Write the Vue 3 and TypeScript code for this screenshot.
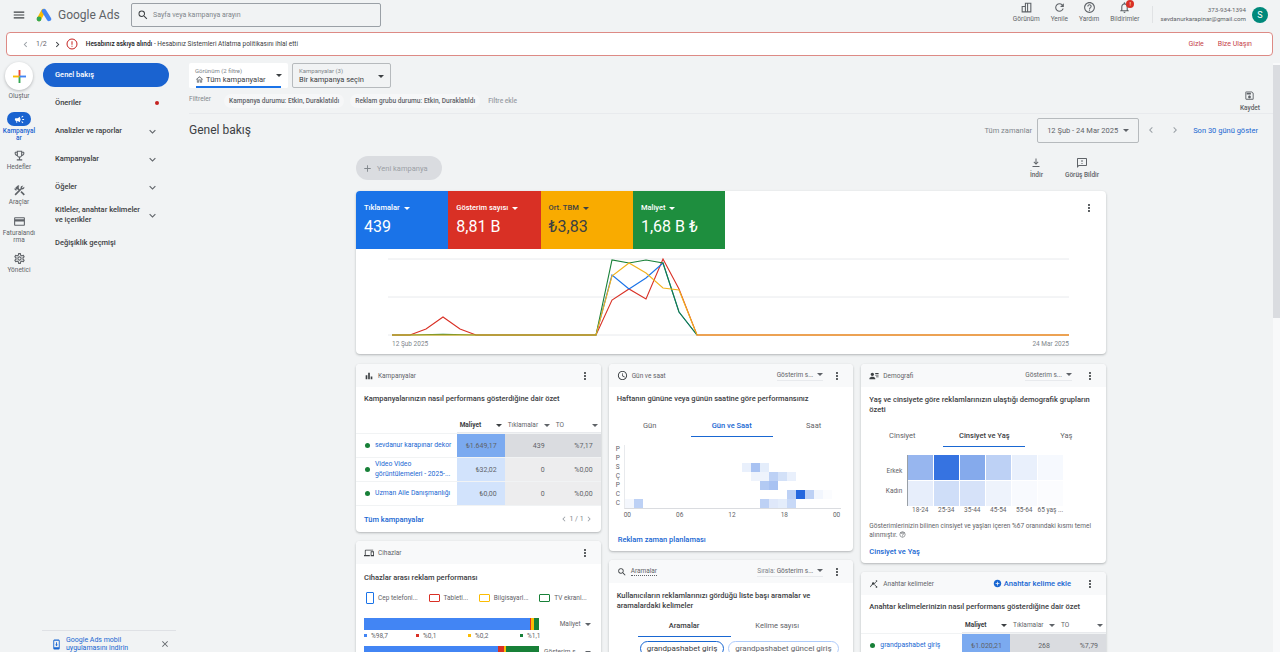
<template>
  <div class="page">
    <header class="topbar">
      <svg class="ic menu" viewBox="0 0 24 24"><path :d="icons.menu" /></svg>
      <svg class="logo" viewBox="0 0 16 14">
        <line x1="3" y1="11" x2="7.4" y2="3" stroke="#fbbc04" stroke-width="4.4" stroke-linecap="round" />
        <line x1="8" y1="3" x2="13" y2="11" stroke="#4285f4" stroke-width="4.4" stroke-linecap="round" />
        <circle cx="3" cy="11" r="2.4" fill="#34a853" />
      </svg>
      <span class="brand">Google Ads</span>
      <div class="search">
        <svg class="ic search-ic" viewBox="0 0 24 24"><path :d="icons.search" /></svg>
        <span>Sayfa veya kampanya arayın</span>
      </div>
      <div class="actions">
        <div v-for="a in topActions" :key="a.label" class="action">
          <svg class="ic" viewBox="0 0 24 24"><path :d="a.icon" /></svg>
          <span>{{ a.label }}</span>
          <i v-if="a.badge" class="badge">!</i>
        </div>
      </div>
      <div class="account">
        <span>373-934-1394</span>
        <span>sevdanurkarapinar@gmail.com</span>
      </div>
      <div class="avatar">S</div>
    </header>

    <div class="alert">
      <svg class="ic dim" viewBox="0 0 24 24"><path :d="icons.left" /></svg>
      <span class="pager">1/2</span>
      <svg class="ic" viewBox="0 0 24 24"><path :d="icons.right" /></svg>
      <svg class="alert-ic" viewBox="0 0 24 24"><circle cx="12" cy="12" r="10" /><path d="M11 6.5h2v7h-2zM11 15.5h2v2h-2z" /></svg>
      <span class="alert-text"><b>Hesabınız askıya alındı</b> - Hesabınız Sistemleri Atlatma politikasını ihlal etti</span>
      <span class="alert-link first">Gizle</span>
      <span class="alert-link">Bize Ulaşın</span>
    </div>

    <div class="body">
      <aside class="rail">
        <div class="create">
          <svg viewBox="0 0 14 14">
            <rect x="6" y="0" width="2" height="7" fill="#ea4335" />
            <rect x="6" y="7" width="2" height="7" fill="#34a853" />
            <rect x="0" y="6" width="7" height="2" fill="#fbbc04" />
            <rect x="7" y="6" width="7" height="2" fill="#4285f4" />
          </svg>
        </div>
        <span class="rail-label create-label">Oluştur</span>
        <div
          v-for="r in railItems"
          :key="r.label"
          class="rail-item"
          :class="{ active: r.active }"
          :style="{ marginBottom: r.gap + 'px' }"
        >
          <div class="rail-icon">
            <svg class="ic" viewBox="0 0 24 24"><path :d="r.icon" /></svg>
          </div>
          <span class="rail-label">{{ r.label }}</span>
        </div>
      </aside>

      <nav class="nav">
        <div class="nav-current">Genel bakış</div>
        <div v-for="n in navItems" :key="n.label" class="nav-item">
          <span>{{ n.label }}</span>
          <i v-if="n.dot" class="nav-dot"></i>
          <svg v-if="n.chevron" class="ic chev" viewBox="0 0 24 24"><path :d="icons.expand" /></svg>
        </div>
        <div class="nav-foot">
          <svg class="ic phone" viewBox="0 0 24 24"><path :d="icons.phone" /></svg>
          <span>Google Ads mobil<br />uygulamasını indirin</span>
          <svg class="ic close" viewBox="0 0 24 24"><path :d="icons.close" /></svg>
        </div>
      </nav>

      <main class="main">
        <section class="head">
          <div class="head-left">
            <div class="selectors">
              <div class="selector view">
                <small>Görünüm (2 filtre)</small>
                <span><svg class="ic home" viewBox="0 0 24 24"><path :d="icons.home" /></svg>Tüm kampanyalar</span>
                <i class="caret"></i>
              </div>
              <div class="selector camp">
                <small>Kampanyalar (3)</small>
                <span>Bir kampanya seçin</span>
                <i class="caret"></i>
              </div>
            </div>
            <div class="filters">
              <span class="filters-label">Filtreler</span>
              <span class="filter-chip">Kampanya durumu: Etkin, Duraklatıldı</span>
              <span class="filter-chip">Reklam grubu durumu: Etkin, Duraklatıldı</span>
              <span class="filter-add">Filtre ekle</span>
            </div>
          </div>
          <div class="save">
            <svg class="ic" viewBox="0 0 24 24"><path :d="icons.save" /></svg>
            <span>Kaydet</span>
          </div>
        </section>

        <section class="title-row">
          <h1>Genel bakış</h1>
          <span class="range-label">Tüm zamanlar</span>
          <div class="range">12 Şub - 24 Mar 2025<i class="caret"></i></div>
          <svg class="ic range-nav" viewBox="0 0 24 24"><path :d="icons.left" /></svg>
          <svg class="ic range-nav" viewBox="0 0 24 24"><path :d="icons.right" /></svg>
          <span class="range-link">Son 30 günü göster</span>
        </section>

        <div class="content">
          <div class="toolbar">
            <div class="new-camp">
              <svg class="ic" viewBox="0 0 24 24"><path :d="icons.add" /></svg>
              <span>Yeni kampanya</span>
            </div>
            <div class="tool first">
              <svg class="ic" viewBox="0 0 24 24"><path :d="icons.download" /></svg>
              <span>İndir</span>
            </div>
            <div class="tool">
              <svg class="ic" viewBox="0 0 24 24"><path :d="icons.feedback" /></svg>
              <span>Görüş Bildir</span>
            </div>
          </div>

          <div class="card chart-card">
            <div class="metrics">
              <div v-for="m in metrics" :key="m.label" class="metric" :class="m.cls">
                <span class="metric-label">{{ m.label }}<i class="caret"></i></span>
                <span class="metric-value">{{ m.value }}</span>
              </div>
              <svg class="ic more chart-more" viewBox="0 0 24 24"><path :d="icons.more" /></svg>
            </div>
            <svg class="chart" viewBox="356 248 750 106">
              <line v-for="y in [258, 296, 334]" :key="y" x1="388" x2="1069" :y1="y" :y2="y" stroke="#e8eaed" />
              <polyline v-for="s in series" :key="s.color" :points="s.points" :stroke="s.color" fill="none" stroke-width="1.1" />
              <text x="392" y="344.5" class="axis">12 Şub 2025</text>
              <text x="1069" y="344.5" class="axis" text-anchor="end">24 Mar 2025</text>
            </svg>
          </div>

          <div class="columns">
            <div class="col">
              <div class="card">
                <div class="card-head">
                  <svg class="ic head-ic" viewBox="0 0 24 24"><path :d="icons.bars" /></svg>
                  <span class="card-name">Kampanyalar</span>
                  <svg class="ic more" viewBox="0 0 24 24"><path :d="icons.more" /></svg>
                </div>
                <p class="card-title">Kampanyalarınızın nasıl performans gösterdiğine dair özet</p>
                <div class="perf-head spaced">
                  <span class="strong">Maliyet<i class="caret"></i></span>
                  <span>Tıklamalar<i class="caret"></i></span>
                  <span>TO<i class="caret"></i></span>
                </div>
                <div v-for="row in campaigns" :key="row.name" class="perf-row">
                  <i class="status"></i>
                  <span class="perf-name">{{ row.name }}</span>
                  <span class="perf-num" :style="{ background: row.costBg }">{{ row.cost }}</span>
                  <span class="perf-num" :style="{ background: row.restBg }">{{ row.clicks }}</span>
                  <span class="perf-num" :style="{ background: row.restBg }">{{ row.rate }}</span>
                </div>
                <div class="card-foot">
                  <span class="link">Tüm kampanyalar</span>
                  <span class="paging">
                    <svg class="ic" viewBox="0 0 24 24"><path :d="icons.left" /></svg>
                    1 / 1
                    <svg class="ic" viewBox="0 0 24 24"><path :d="icons.right" /></svg>
                  </span>
                </div>
              </div>

              <div class="card">
                <div class="card-head">
                  <svg class="ic head-ic" viewBox="0 0 24 24"><path :d="icons.devices" /></svg>
                  <span class="card-name">Cihazlar</span>
                  <svg class="ic more" viewBox="0 0 24 24"><path :d="icons.more" /></svg>
                </div>
                <p class="card-title device-title">Cihazlar arası reklam performansı</p>
                <div class="device-legend">
                  <span v-for="d in devices" :key="d.label" class="device">
                    <i class="device-ic" :class="d.shape" :style="{ borderColor: d.color }"></i>{{ d.label }}
                  </span>
                </div>
                <div v-for="b in deviceBars" :key="b.metric" class="device-row">
                  <div class="device-main">
                    <div class="stack">
                      <i v-for="s in b.segs" :key="s.color" :style="{ flexBasis: s.w + 'px', background: s.color }"></i>
                    </div>
                    <div v-if="b.legend" class="stack-legend">
                      <span v-for="s in b.segs" :key="s.color">
                        <i :style="{ background: s.color }"></i>{{ s.label }}
                      </span>
                    </div>
                  </div>
                  <span class="device-metric">{{ b.metric }}<i class="caret"></i></span>
                </div>
              </div>
            </div>

            <div class="col">
              <div class="card">
                <div class="card-head">
                  <svg class="ic head-ic big" viewBox="0 0 24 24"><path :d="icons.schedule" /></svg>
                  <span class="card-name">Gün ve saat</span>
                  <span class="head-select">Gösterim s...<i class="caret"></i></span>
                  <svg class="ic more" viewBox="0 0 24 24"><path :d="icons.more" /></svg>
                </div>
                <p class="card-title">Haftanın gününe veya günün saatine göre performansınız</p>
                <div class="tabs">
                  <span>Gün</span>
                  <span class="on">Gün ve Saat</span>
                  <span>Saat</span>
                </div>
                <div class="time-map">
                  <div class="time-days">
                    <span v-for="(d, i) in days" :key="i">{{ d }}</span>
                  </div>
                  <div class="time-grid">
                    <i v-for="c in timeCells" :key="c.key" :style="{ background: c.bg }"></i>
                  </div>
                </div>
                <div class="time-axis">
                  <span v-for="(h, i) in hours" :key="i">{{ h }}</span>
                </div>
                <div class="time-link link">Reklam zaman planlaması</div>
              </div>

              <div class="card">
                <div class="card-head">
                  <svg class="ic head-ic" viewBox="0 0 24 24"><path :d="icons.search" /></svg>
                  <span class="card-name under">Aramalar</span>
                  <span class="head-select"><em>Sırala:</em> Gösterim s...<i class="caret"></i></span>
                  <svg class="ic more" viewBox="0 0 24 24"><path :d="icons.more" /></svg>
                </div>
                <p class="card-title two">Kullanıcıların reklamlarınızı gördüğü liste başı aramalar ve aramalardaki kelimeler</p>
                <div class="tabs search-tabs">
                  <span class="on dark">Aramalar</span>
                  <span>Kelime sayısı</span>
                </div>
                <div class="chips">
                  <span class="chip sel">grandpashabet giriş</span>
                  <span class="chip">grandpashabet güncel giriş</span>
                </div>
              </div>
            </div>

            <div class="col">
              <div class="card">
                <div class="card-head">
                  <svg class="ic head-ic" viewBox="0 0 24 24"><path :d="icons.people" /></svg>
                  <span class="card-name">Demografi</span>
                  <span class="head-select demo-select">Gösterim s...<i class="caret"></i></span>
                  <svg class="ic more" viewBox="0 0 24 24"><path :d="icons.more" /></svg>
                </div>
                <p class="card-title two">Yaş ve cinsiyete göre reklamlarınızın ulaştığı demografik grupların özeti</p>
                <div class="tabs demo-tabs">
                  <span>Cinsiyet</span>
                  <span class="on dark">Cinsiyet ve Yaş</span>
                  <span>Yaş</span>
                </div>
                <div class="demo-map">
                  <div class="demo-rows"><span>Erkek</span><span>Kadın</span></div>
                  <div class="demo-grid">
                    <i v-for="c in demoCells" :key="c.key" :style="{ background: c.bg }"></i>
                  </div>
                </div>
                <div class="demo-axis">
                  <span v-for="a in ages" :key="a">{{ a }}</span>
                </div>
                <p class="demo-note">Gösterimlerinizin bilinen cinsiyet ve yaşları içeren %67 oranındaki kısmı temel alınmıştır. <svg class="ic note-ic" viewBox="0 0 24 24"><path :d="icons.help" /></svg></p>
                <div class="demo-link link">Cinsiyet ve Yaş</div>
              </div>

              <div class="card">
                <div class="card-head">
                  <svg class="ic head-ic" viewBox="0 0 24 24"><path :d="icons.keyword" /></svg>
                  <span class="card-name">Anahtar kelimeler</span>
                  <span class="add-kw">
                    <svg class="ic" viewBox="0 0 24 24"><path :d="icons.addCircle" /></svg>Anahtar kelime ekle
                  </span>
                  <svg class="ic more" viewBox="0 0 24 24"><path :d="icons.more" /></svg>
                </div>
                <p class="card-title">Anahtar kelimelerinizin nasıl performans gösterdiğine dair özet</p>
                <div class="perf-head">
                  <span class="strong">Maliyet<i class="caret"></i></span>
                  <span>Tıklamalar<i class="caret"></i></span>
                  <span>TO<i class="caret"></i></span>
                </div>
                <div class="perf-row">
                  <i class="status"></i>
                  <span class="perf-name">grandpashabet giriş</span>
                  <span class="perf-num" style="background: #7baaf0">₺1.020,21</span>
                  <span class="perf-num" style="background: #dadce0">268</span>
                  <span class="perf-num" style="background: #dadce0">%7,79</span>
                </div>
              </div>
            </div>
          </div>
        </div>
      </main>

      <div class="scrollbar"><i></i></div>
    </div>
  </div>
</template>

<script setup lang="ts">
import { computed } from 'vue'

const icons = {
  menu: 'M3 18h18v-2H3v2zm0-5h18v-2H3v2zm0-7v2h18V6H3z',
  search: 'M15.5 14h-.79l-.28-.27A6.471 6.471 0 0 0 16 9.5 6.5 6.5 0 1 0 9.5 16c1.61 0 3.09-.59 4.23-1.57l.27.28v.79l5 4.99L20.49 19l-4.99-5zm-6 0C7.01 14 5 11.99 5 9.5S7.01 5 9.5 5 14 7.01 14 9.5 11.99 14 9.5 14z',
  view: 'M3 21V9h6V3h12v18H3zm2-2h4v-8H5v8zm6 0h2V5h-2v14zm4 0h4V5h-4v14z',
  refresh: 'M17.65 6.35A7.958 7.958 0 0 0 12 4c-4.42 0-7.99 3.58-7.99 8s3.57 8 7.99 8c3.73 0 6.84-2.55 7.73-6h-2.08A5.99 5.99 0 0 1 12 18c-3.31 0-6-2.69-6-6s2.69-6 6-6c1.66 0 3.14.69 4.22 1.78L13 11h7V4l-2.35 2.35z',
  help: 'M11 18h2v-2h-2v2zm1-16C6.48 2 2 6.48 2 12s4.48 10 10 10 10-4.48 10-10S17.52 2 12 2zm0 18c-4.41 0-8-3.59-8-8s3.59-8 8-8 8 3.59 8 8-3.59 8-8 8zm0-14c-2.21 0-4 1.79-4 4h2c0-1.1.9-2 2-2s2 .9 2 2c0 2-3 1.75-3 5h2c0-2.25 3-2.5 3-5 0-2.21-1.79-4-4-4z',
  bell: 'M12 22c1.1 0 2-.9 2-2h-4c0 1.1.9 2 2 2zm6-6v-5c0-3.07-1.63-5.64-4.5-6.32V4c0-.83-.67-1.5-1.5-1.5s-1.5.67-1.5 1.5v.68C7.64 5.36 6 7.92 6 11v5l-2 2v1h16v-1l-2-2zm-2 1H8v-6c0-2.48 1.51-4.5 4-4.5s4 2.02 4 4.5v6z',
  more: 'M12 8c1.1 0 2-.9 2-2s-.9-2-2-2-2 .9-2 2 .9 2 2 2zm0 2c-1.1 0-2 .9-2 2s.9 2 2 2 2-.9 2-2-.9-2-2-2zm0 6c-1.1 0-2 .9-2 2s.9 2 2 2 2-.9 2-2-.9-2-2-2z',
  expand: 'M16.59 8.59 12 13.17 7.41 8.59 6 10l6 6 6-6z',
  left: 'M15.41 7.41 14 6l-6 6 6 6 1.41-1.41L10.83 12z',
  right: 'M10 6 8.59 7.41 13.17 12l-4.58 4.59L10 18l6-6z',
  add: 'M19 13h-6v6h-2v-6H5v-2h6V5h2v6h6v2z',
  campaign: 'M18 11v2h4v-2h-4zm-2 6.61c.96.71 2.21 1.65 3.2 2.39.4-.53.8-1.07 1.2-1.6-.99-.74-2.24-1.68-3.2-2.4-.4.54-.8 1.08-1.2 1.61zM20.4 5.6c-.4-.53-.8-1.07-1.2-1.6-.99.74-2.24 1.68-3.2 2.4.4.53.8 1.07 1.2 1.6.96-.72 2.21-1.65 3.2-2.4zM4 9c-1.1 0-2 .9-2 2v2c0 1.1.9 2 2 2h1v4h2v-4h1l5 3V6L8 9H4zm11.5 3c0-1.33-.58-2.53-1.5-3.35v6.69c.92-.81 1.5-2.01 1.5-3.34z',
  trophy: 'M19 5h-2V3H7v2H5c-1.1 0-2 .9-2 2v1c0 2.55 1.92 4.63 4.39 4.94.63 1.5 1.98 2.63 3.61 2.96V19H7v2h10v-2h-4v-3.1c1.63-.33 2.98-1.46 3.61-2.96C19.08 12.63 21 10.55 21 8V7c0-1.1-.9-2-2-2zM5 8V7h2v3.82C5.84 10.4 5 9.3 5 8zm7 6c-1.65 0-3-1.35-3-3V5h6v6c0 1.65-1.35 3-3 3zm7-6c0 1.3-.84 2.4-2 2.82V7h2v1z',
  tools: 'M13.78 15.3 19.78 21.3 21.89 19.14 15.89 13.14zM17.5 10c1.93 0 3.5-1.57 3.5-3.5 0-.58-.16-1.12-.41-1.6l-2.7 2.7-1.49-1.49 2.7-2.7c-.48-.25-1.02-.41-1.6-.41C15.57 3 14 4.57 14 6.5c0 .41.08.8.21 1.16l-1.85 1.85-1.78-1.78.71-.71-1.41-1.41L12 3.49a3 3 0 0 0-4.24 0L4.22 7.03l1.41 1.41H2.81l-.71.71 3.54 3.54.71-.71V9.15l1.41 1.41.71-.71 1.78 1.78-7.41 7.41 2.12 2.12L16.34 9.79c.36.13.75.21 1.16.21z',
  card: 'M20 4H4c-1.11 0-1.99.89-1.99 2L2 18c0 1.11.89 2 2 2h16c1.11 0 2-.89 2-2V6c0-1.11-.89-2-2-2zm0 14H4v-6h16v6zm0-10H4V6h16v2z',
  gear: 'M19.43 12.98c.04-.32.07-.64.07-.98s-.03-.66-.07-.98l2.11-1.65c.19-.15.24-.42.12-.64l-2-3.46c-.12-.22-.39-.3-.61-.22l-2.49 1c-.52-.4-1.08-.73-1.69-.98l-.38-2.65C14.46 2.18 14.25 2 14 2h-4c-.25 0-.46.18-.49.42l-.38 2.65c-.61.25-1.17.59-1.69.98l-2.49-1c-.23-.09-.49 0-.61.22l-2 3.46c-.13.22-.07.49.12.64l2.11 1.65c-.04.32-.07.65-.07.98s.03.66.07.98l-2.11 1.65c-.19.15-.24.42-.12.64l2 3.46c.12.22.39.3.61.22l2.49-1c.52.4 1.08.73 1.69.98l.38 2.65c.03.24.24.42.49.42h4c.25 0 .46-.18.49-.42l.38-2.65c.61-.25 1.17-.59 1.69-.98l2.49 1c.23.09.49 0 .61-.22l2-3.46c.12-.22.07-.49-.12-.64l-2.11-1.65zM17.45 11.27c.04.31.05.52.05.73 0 .21-.02.43-.05.73l-.14 1.13.89.7 1.08.84-.7 1.21-1.27-.51-1.04-.42-.9.68c-.43.32-.84.56-1.25.73l-1.06.43-.16 1.13-.2 1.35h-1.4l-.19-1.35-.16-1.13-1.06-.43c-.43-.18-.83-.41-1.23-.71l-.91-.7-1.06.43-1.27.51-.7-1.21 1.08-.84.89-.7-.14-1.13c-.03-.31-.05-.54-.05-.74s.02-.43.05-.73l.14-1.13-.89-.7-1.08-.84.7-1.21 1.27.51 1.04.42.9-.68c.43-.32.84-.56 1.25-.73l1.06-.43.16-1.13.2-1.35h1.39l.19 1.35.16 1.13 1.06.43c.43.18.83.41 1.23.71l.91.7 1.06-.43 1.27-.51.7 1.21-1.07.85-.89.7.14 1.13zM12 8c-2.21 0-4 1.79-4 4s1.79 4 4 4 4-1.79 4-4-1.79-4-4-4zm0 6c-1.1 0-2-.9-2-2s.9-2 2-2 2 .9 2 2-.9 2-2 2z',
  save: 'M17 3H5c-1.11 0-2 .9-2 2v14c0 1.1.89 2 2 2h14c1.1 0 2-.9 2-2V7l-4-4zm2 16H5V5h11.17L19 7.83V19zm-7-7c-1.66 0-3 1.34-3 3s1.34 3 3 3 3-1.34 3-3-1.34-3-3-3zM6 6h9v4H6z',
  download: 'M5 20h14v-2H5v2zm2-9.4 1.4-1.4 2.6 2.6V3h2v8.8l2.6-2.6 1.4 1.4-5 5-5-5z',
  feedback: 'M20 2H4c-1.1 0-1.99.9-1.99 2L2 22l4-4h14c1.1 0 2-.9 2-2V4c0-1.1-.9-2-2-2zm0 14H5.17L4 17.17V4h16v12zM11 12h2v2h-2zm0-6h2v4h-2z',
  home: 'M12 5.69l5 4.5V18h-2v-6H9v6H7v-7.81l5-4.5M12 3 2 12h3v8h6v-6h2v6h6v-8h3L12 3z',
  bars: 'M4 20V10h4v10H4zm6 0V4h4v16h-4zm6 0v-7h4v7h-4z',
  devices: 'M4 6h18V4H4c-1.1 0-2 .9-2 2v11H0v3h14v-3H4V6zm19 2h-6c-.55 0-1 .45-1 1v10c0 .55.45 1 1 1h6c.55 0 1-.45 1-1V9c0-.55-.45-1-1-1zm-1 9h-4v-7h4v7z',
  schedule: 'M11.99 2C6.47 2 2 6.48 2 12s4.47 10 9.99 10C17.52 22 22 17.52 22 12S17.52 2 11.99 2zM12 20c-4.42 0-8-3.58-8-8s3.58-8 8-8 8 3.58 8 8-3.58 8-8 8zm.5-13H11v6l5.25 3.15.75-1.23-4.5-2.67z',
  people: 'M8 12c2.2 0 4-1.8 4-4S10.2 4 8 4 4 5.8 4 8s1.8 4 4 4zm0 2c-2.7 0-7 1.3-7 4v2h14v-2c0-2.7-4.3-4-7-4zM15 5h8v2h-8zM15 9h8v2h-8zM17 13h6v2h-6z',
  keyword: 'M3 20l6-7-1.5-1.3L2 18.5zM10 14a3 3 0 1 0 0-6 3 3 0 0 0 0 6zm8-7a2 2 0 1 0 0-4 2 2 0 0 0 0 4zm0 14a2 2 0 1 0 0-4 2 2 0 0 0 0 4zm-5.5-10.6 3.6-3.2 1 1.2-3.6 3.2zm0 3.2 1-1.2 3.6 3.6-1 1.2z',
  addCircle: 'M12 2C6.48 2 2 6.48 2 12s4.48 10 10 10 10-4.48 10-10S17.52 2 12 2zm5 11h-4v4h-2v-4H7v-2h4V7h2v4h4v2z',
  close: 'M19 6.41 17.59 5 12 10.59 6.41 5 5 6.41 10.59 12 5 17.59 6.41 19 12 13.41 17.59 19 19 17.59 13.41 12z',
  phone: 'M16 1H8C6.34 1 5 2.34 5 4v16c0 1.66 1.34 3 3 3h8c1.66 0 3-1.34 3-3V4c0-1.66-1.34-3-3-3zm1 17H7V4h10v14zm-5-2 3-4h-2V7h-2v5H9l3 4z',
}

const topActions = [
  { label: 'Görünüm', icon: icons.view, badge: false },
  { label: 'Yenile', icon: icons.refresh, badge: false },
  { label: 'Yardım', icon: icons.help, badge: false },
  { label: 'Bildirimler', icon: icons.bell, badge: true },
]

const railItems = [
  { label: 'Kampanyalar', icon: icons.campaign, active: true, gap: 6 },
  { label: 'Hedefler', icon: icons.trophy, active: false, gap: 12 },
  { label: 'Araçlar', icon: icons.tools, active: false, gap: 8 },
  { label: 'Faturalandırma', icon: icons.card, active: false, gap: 7 },
  { label: 'Yönetici', icon: icons.gear, active: false, gap: 0 },
]

const navItems = [
  { label: 'Öneriler', dot: true, chevron: false },
  { label: 'Analizler ve raporlar', dot: false, chevron: true },
  { label: 'Kampanyalar', dot: false, chevron: true },
  { label: 'Öğeler', dot: false, chevron: true },
  { label: 'Kitleler, anahtar kelimeler ve içerikler', dot: false, chevron: true },
  { label: 'Değişiklik geçmişi', dot: false, chevron: false },
]

const metrics = [
  { label: 'Tıklamalar', value: '439', cls: 'blue' },
  { label: 'Gösterim sayısı', value: '8,81 B', cls: 'red' },
  { label: 'Ort. TBM', value: '₺3,83', cls: 'amber' },
  { label: 'Maliyet', value: '1,68 B ₺', cls: 'green' },
]

const series = [
  { color: '#d93025', points: '392,334 410,334 426,328 443,316 460,328 476,334 596,334 612,299 629,288 646,298 663,258 679,288 697,334 1069,334' },
  { color: '#1a73e8', points: '596,334 612,274 629,288 646,277 663,262 679,311 697,334' },
  { color: '#188038', points: '392,334 410,334 443,333.4 476,334 596,334 612,259 629,262 646,259 663,262 679,311 697,334' },
  { color: '#f2b21b', points: '392,334 596,334 612,275 629,262 646,272 663,287 679,289 697,334 1069,334' },
]

const campaigns = [
  { name: 'sevdanur karapınar dekor', cost: '₺1.649,17', clicks: '439', rate: '%7,17', costBg: '#7baaf0', restBg: '#dadce0' },
  { name: 'Video Video görüntülemeleri - 2025-...', cost: '₺32,02', clicks: '0', rate: '%0,00', costBg: '#d2e3fc', restBg: '#ededee' },
  { name: 'Uzman Aile Danışmanlığı', cost: '₺0,00', clicks: '0', rate: '%0,00', costBg: '#d2e3fc', restBg: '#ededee' },
]

const devices = [
  { label: 'Cep telefonl...', color: '#1a73e8', shape: 'tall' },
  { label: 'Tabletl...', color: '#d93025', shape: 'wide' },
  { label: 'Bilgisayarl...', color: '#fbbc04', shape: 'wide' },
  { label: 'TV ekranl...', color: '#188038', shape: 'wide' },
]

const deviceBars = [
  {
    metric: 'Maliyet',
    legend: true,
    segs: [
      { w: 166, color: '#4285f4', label: '%98,7' },
      { w: 1, color: '#d93025', label: '%0,1' },
      { w: 3, color: '#fbbc04', label: '%0,2' },
      { w: 5, color: '#188038', label: '%1,1' },
    ],
  },
  {
    metric: 'Gösterim s...',
    legend: false,
    segs: [
      { w: 134, color: '#4285f4', label: '' },
      { w: 6, color: '#d93025', label: '' },
      { w: 2, color: '#fbbc04', label: '' },
      { w: 33, color: '#188038', label: '' },
    ],
  },
]

const days = ['P', 'P', 'S', 'Ç', 'P', 'C', 'C']
const hours = ['00', '06', '12', '18', '00']
const ages = ['18-24', '25-34', '35-44', '45-54', '55-64', '65 yaş ...']

// [day row, hour column, intensity]
const timeValues: [number, number, number][] = [
  [2, 13, 0.1], [2, 14, 0.4], [2, 15, 0.12],
  [3, 14, 0.08], [3, 15, 0.08], [3, 16, 0.3], [3, 17, 0.2], [3, 18, 0.1],
  [4, 15, 0.35], [4, 16, 0.4],
  [5, 18, 0.3], [5, 19, 1], [5, 20, 0.3], [5, 21, 0.06], [5, 22, 0.02],
  [6, 0, 0.05], [6, 1, 0.3], [6, 15, 0.3], [6, 16, 0.15], [6, 17, 0.12], [6, 18, 0.25],
]

function shade(v: number) {
  return v > 0 ? `rgba(37, 103, 222, ${v})` : 'transparent'
}

const timeCells = computed(() => {
  const cells = []
  for (let r = 0; r < 7; r++) {
    for (let c = 0; c < 24; c++) {
      const hit = timeValues.find((t) => t[0] === r && t[1] === c)
      cells.push({ key: `${r}-${c}`, bg: shade(hit ? hit[2] : 0) })
    }
  }
  return cells
})

const demoValues = [0.48, 0.92, 0.56, 0.3, 0.1, 0.04, 0.11, 0.22, 0.19, 0.08, 0.03, 0.02]
const demoCells = computed(() => demoValues.map((v, i) => ({ key: i, bg: shade(v) })))
</script>

<style>
html,
body {
  margin: 0;
  height: 100%;
  overflow: hidden;
  background: #f1f3f4;
}
</style>

<style scoped>
.page {
  display: flex;
  flex-direction: column;
  width: 1280px;
  height: 652px;
  overflow: hidden;
  background: #f1f3f4;
  color: #3c4043;
  font-family: Roboto, 'Noto Sans', sans-serif;
  font-size: 7px;
}

.ic {
  display: block;
  flex: none;
  width: 12px;
  height: 12px;
  fill: #5f6368;
}

p,
h1 {
  margin: 0;
}

i {
  font-style: normal;
}

.caret {
  display: inline-block;
  width: 0;
  height: 0;
  margin-left: 4px;
  vertical-align: middle;
  border-top: 3px solid currentColor;
  border-left: 3px solid transparent;
  border-right: 3px solid transparent;
}

/* top bar */
.topbar {
  display: flex;
  flex: none;
  align-items: center;
  height: 29px;
  padding: 0 12px;
}

.menu {
  width: 14px;
  height: 14px;
  margin-right: 10px;
  fill: #3c4043;
}

.logo {
  width: 16px;
  height: 14px;
  margin-right: 6px;
}

.brand {
  width: 73px;
  font-size: 12px;
  color: #5f6368;
}

.search {
  display: flex;
  align-items: center;
  gap: 4px;
  width: 250px;
  height: 24px;
  padding: 0 5px;
  box-sizing: border-box;
  border: 1px solid #9aa0a6;
  border-radius: 2px;
  color: #80868b;
}

.search-ic {
  width: 12px;
  height: 12px;
  fill: #3c4043;
}

.actions {
  display: flex;
  gap: 11px;
  margin-left: auto;
  padding-right: 13px;
  border-right: 1px solid #e0e2e4;
  margin-right: 7px;
}

.action {
  position: relative;
  display: flex;
  flex-direction: column;
  align-items: center;
  gap: 1px;
  margin-top: -5px;
  font-size: 6.5px;
  color: #5f6368;
}

.action .ic {
  width: 13px;
  height: 13px;
}

.badge {
  position: absolute;
  top: -1px;
  left: 16px;
  width: 8px;
  height: 8px;
  border-radius: 50%;
  background: #d93025;
  color: #fff;
  font-size: 6px;
  line-height: 8px;
  text-align: center;
}

.account {
  display: flex;
  flex-direction: column;
  align-items: flex-end;
  gap: 2px;
  margin-right: 6px;
  font-size: 6.2px;
  line-height: 7px;
  color: #5f6368;
}

.avatar {
  width: 16px;
  height: 16px;
  border-radius: 50%;
  background: #00897b;
  color: #fff;
  font-size: 9px;
  line-height: 16px;
  text-align: center;
}

/* alert */
.alert {
  display: flex;
  flex: none;
  align-items: center;
  height: 24px;
  margin: 3px 7px 0 6px;
  padding: 0 20px 0 13px;
  box-sizing: border-box;
  border: 1px solid #dd8a85;
  border-radius: 4px;
  background: #fff;
}

.alert .ic {
  width: 11px;
  height: 11px;
  fill: #3c4043;
}

.alert .ic.dim {
  fill: #9aa0a6;
}

.pager {
  margin: 0 5px 0 5px;
  color: #5f6368;
}

.alert-ic {
  width: 12px;
  height: 12px;
  margin: 0 8px 0 3px;
  fill: #c5221f;
}

.alert-ic circle {
  fill: none;
  stroke: #c5221f;
  stroke-width: 2;
}

.alert-text {
  flex: 1;
  font-size: 6.5px;
  color: #3c4043;
}

.alert-text b {
  font-weight: 500;
  color: #202124;
}

.alert-link {
  margin-left: 14px;
  color: #c5424a;
}

.alert-link.first {
  margin-left: 0;
}

/* left side */
.body {
  display: flex;
  flex: 1;
  min-height: 0;
  padding-top: 7px;
}

.rail {
  display: flex;
  flex: none;
  flex-direction: column;
  align-items: center;
  width: 38px;
  padding-top: 0;
}

.create {
  display: flex;
  align-items: center;
  justify-content: center;
  width: 28px;
  height: 28px;
  margin-top: -1px;
  border-radius: 50%;
  background: #fff;
  box-shadow: 0 1px 3px rgba(60, 64, 67, 0.35);
}

.create svg {
  width: 13px;
  height: 13px;
}

.rail-label {
  display: block;
  width: 34px;
  font-size: 6.5px;
  line-height: 7px;
  text-align: center;
  word-break: break-all;
  color: #5f6368;
}

.create-label {
  margin-top: 3px;
  margin-bottom: 12px;
}

.rail-item {
  display: flex;
  flex-direction: column;
  align-items: center;
  gap: 2px;
}

.rail-icon {
  display: flex;
  align-items: center;
  justify-content: center;
  width: 24px;
  height: 14px;
  border-radius: 7px;
}

.rail-icon .ic {
  width: 13px;
  height: 13px;
}

.rail-item.active .rail-icon {
  background: #1a63d0;
}

.rail-item.active .ic {
  width: 11px;
  height: 11px;
  fill: #fff;
}

.rail-item.active .rail-label {
  color: #1a63d0;
  font-weight: 500;
}

.nav {
  display: flex;
  flex: none;
  flex-direction: column;
  width: 138px;
  font-size: 7.5px;
  font-weight: 500;
  color: #3c4043;
}

.nav-current {
  width: 126px;
  height: 24px;
  margin-left: 5px;
  margin-bottom: 2px;
  padding-left: 12px;
  box-sizing: border-box;
  border-radius: 12px;
  background: #1a63d0;
  color: #fff;
  line-height: 24px;
}

.nav-item {
  display: flex;
  align-items: center;
  width: 119px;
  height: 28px;
  margin-left: 17px;
  line-height: 10px;
}

.nav-item span {
  width: 88px;
  flex: none;
}

.nav-dot {
  width: 4px;
  height: 4px;
  margin-left: 12px;
  border-radius: 50%;
  background: #c5221f;
}

.chev {
  width: 13px;
  height: 13px;
  margin-left: 3px;
}

.nav-foot {
  display: flex;
  align-items: center;
  gap: 4px;
  margin-top: auto;
  margin-left: 4px;
  margin-bottom: -5px;
  height: 26px;
  padding: 0 6px 0 9px;
  border-top: 1px solid #dfe1e5;
  font-size: 7px;
  font-weight: 400;
  line-height: 8px;
  color: #1967d2;
}

.nav-foot span {
  flex: 1;
}

.phone {
  width: 11px;
  height: 13px;
  fill: #1967d2;
}

.close {
  width: 10px;
  height: 10px;
}

/* main */
.main {
  flex: 1;
  min-width: 0;
  padding-left: 13px;
  overflow: hidden;
}

.head {
  display: flex;
  height: 50px;
  padding-right: 13px;
  border-bottom: 1px solid #e8eaed;
}

.head-left {
  flex: 1;
}

.selectors {
  display: flex;
  gap: 4px;
}

.selector {
  position: relative;
  display: flex;
  flex-direction: column;
  justify-content: center;
  gap: 1px;
  width: 99px;
  height: 25px;
  padding-left: 6px;
  box-sizing: border-box;
  border-radius: 2px;
  font-size: 7.5px;
  line-height: 9px;
  color: #3c4043;
}

.selector small {
  font-size: 6px;
  line-height: 7px;
  color: #80868b;
}

.selector span {
  display: flex;
  align-items: center;
  gap: 2px;
}

.selector .caret {
  position: absolute;
  top: 11px;
  right: 6px;
  color: #3c4043;
}

.view {
  background: #fff;
  box-shadow: inset 0 -2px 0 #fff;
}

.view::after {
  content: '';
  position: absolute;
  left: 7px;
  right: 7px;
  bottom: 0;
  height: 2px;
  background: #1a73e8;
}

.camp {
  border: 1px solid #b6babd;
}

.home {
  width: 9px;
  height: 9px;
}

.filters {
  display: flex;
  align-items: center;
  gap: 14px;
  margin-top: 4px;
  height: 18px;
  font-size: 6.6px;
  color: #5f6368;
}

.filters-label {
  margin-right: -1px;
  margin-top: -4px;
  color: #80868b;
}

.filter-chip {
  padding: 3px 5px;
  margin-right: -8px;
  border-radius: 9px;
  background: #f6f7f8;
  color: #5f6368;
  font-weight: 500;
}

.filter-add {
  margin-left: 2px;
  color: #9aa0a6;
  font-weight: 500;
}

.save {
  display: flex;
  flex-direction: column;
  align-items: center;
  gap: 3px;
  margin-top: 27px;
  font-size: 6.5px;
  font-weight: 500;
  color: #5f6368;
}

.save .ic {
  width: 11px;
  height: 11px;
}

.title-row {
  display: flex;
  align-items: center;
  height: 24px;
  margin-top: 4px;
  padding-right: 15px;
}

h1 {
  flex: 1;
  font-size: 12px;
  font-weight: 400;
  color: #3c4043;
}

.range-label {
  margin-right: 5px;
  font-size: 7.5px;
  color: #80868b;
}

.range {
  display: flex;
  align-items: center;
  justify-content: space-between;
  width: 102px;
  height: 25px;
  padding: 0 9px;
  box-sizing: border-box;
  border: 1px solid #b6babd;
  border-radius: 2px;
  font-size: 7.5px;
  color: #5f6368;
}

.range-nav {
  width: 12px;
  height: 12px;
  margin-left: 6px;
  fill: #9aa0a6;
}

.range-nav + .range-nav {
  margin-left: 12px;
}

.range-link {
  margin-left: 12px;
  font-size: 7.5px;
  color: #1967d2;
}

.content {
  width: 750px;
  margin-left: 167px;
}

.toolbar {
  display: flex;
  align-items: center;
  height: 30px;
  margin-top: 11px;
  margin-bottom: 8px;
}

.new-camp {
  display: flex;
  align-items: center;
  gap: 4px;
  width: 86px;
  height: 24px;
  padding-left: 6px;
  box-sizing: border-box;
  border-radius: 12px;
  background: #dadce0;
  font-size: 7.5px;
  color: #9aa0a6;
}

.new-camp .ic {
  width: 11px;
  height: 11px;
  fill: #80868b;
}

.tool {
  display: flex;
  flex-direction: column;
  align-items: center;
  gap: 2px;
  margin-left: 22px;
  font-size: 6.5px;
  font-weight: 500;
  color: #5f6368;
}

.tool.first {
  margin-left: auto;
}

.tool:last-child {
  margin-right: 7px;
}

.card {
  border-radius: 4px;
  background: #fff;
  box-shadow: 0 1px 2px rgba(60, 64, 67, 0.25), 0 1px 3px rgba(60, 64, 67, 0.1);
  overflow: hidden;
}

.chart-card {
  height: 163px;
}

.metrics {
  display: flex;
}

.metric {
  display: flex;
  flex-direction: column;
  width: 92.3px;
  height: 58px;
  padding: 12px 8px 0;
  box-sizing: border-box;
  color: #fff;
}

.metric-label {
  font-size: 7.5px;
  font-weight: 500;
  line-height: 9px;
}

.metric-value {
  margin-top: 5px;
  font-size: 16px;
  line-height: 20px;
}

.blue {
  background: #1a73e8;
}

.red {
  background: #d93025;
}

.amber {
  background: #f9ab00;
  color: #3c4043;
}

.green {
  background: #1e8e3e;
}

.more {
  width: 12px;
  height: 12px;
  fill: #3c4043;
}

.chart-more {
  margin: 11px 11px 0 auto;
}

.chart {
  display: block;
  width: 750px;
  height: 106px;
}

.axis {
  font-size: 6.5px;
  fill: #80868b;
}

.columns {
  display: grid;
  grid-template-columns: repeat(3, minmax(0, 1fr));
  align-items: start;
  gap: 8px;
  margin-top: 10px;
}

.col {
  display: flex;
  flex-direction: column;
  gap: 9px;
  min-width: 0;
}

.card-head {
  display: flex;
  align-items: center;
  height: 23px;
  padding: 0 10px 0 8px;
  background: #f8f9fa;
  color: #5f6368;
}

.head-ic {
  width: 10px;
  height: 10px;
  margin-right: 4px;
  fill: #3c4043;
}

.head-ic.big {
  width: 11px;
  height: 11px;
}

.card-name {
  flex: 1;
  font-size: 6.5px;
}

.card-name.under {
  flex: 0 0 auto;
  margin-right: auto;
  border-bottom: 1px dotted #5f6368;
}

.head-select {
  margin-right: 8px;
  padding-bottom: 1px;
  border-bottom: 1px solid #e8eaed;
  font-size: 6.5px;
  color: #5f6368;
}

.head-select.demo-select {
  margin-right: 12px;
}

.head-select em {
  font-style: normal;
  color: #80868b;
}

.add-kw {
  display: flex;
  align-items: center;
  gap: 2px;
  margin-right: 13px;
  font-size: 7.6px;
  font-weight: 500;
  color: #1967d2;
}

.add-kw .ic {
  width: 9px;
  height: 9px;
  fill: #1967d2;
}

.card-title {
  padding: 7px 8px 0;
  font-size: 7.5px;
  font-weight: 500;
  line-height: 10px;
  color: #3c4043;
}

.card-title.two {
  padding-top: 8px;
}

.device-title {
  padding-top: 9px;
}

/* performance tables */
.perf-head {
  display: flex;
  justify-content: flex-end;
  align-items: center;
  height: 15px;
  margin-top: 6px;
  font-size: 6.5px;
  color: #5f6368;
}

.perf-head.spaced {
  margin-top: 14px;
}

.perf-head span {
  display: flex;
  align-items: center;
  justify-content: space-between;
  width: 48px;
  height: 14px;
  padding: 0 3px;
  box-sizing: border-box;
  border-bottom: 1px solid #e8eaed;
}

.perf-head .strong {
  font-weight: 700;
  color: #3c4043;
}

.perf-row {
  display: flex;
  align-items: center;
  height: 24px;
  border-top: 1px solid #f1f3f4;
  box-sizing: border-box;
}

.status {
  flex: none;
  width: 5px;
  height: 5px;
  margin: 0 5px 0 9px;
  border-radius: 50%;
  background: #188038;
}

.perf-name {
  flex: 1;
  min-width: 0;
  padding-right: 2px;
  box-sizing: border-box;
  font-size: 6.8px;
  line-height: 9.5px;
  color: #1967d2;
}

.perf-num {
  display: flex;
  align-items: center;
  justify-content: flex-end;
  width: 48px;
  height: 100%;
  flex: none;
  padding-right: 8px;
  box-sizing: border-box;
  font-size: 7px;
  color: #5f6368;
}

.card-foot {
  display: flex;
  align-items: center;
  justify-content: space-between;
  height: 26px;
  padding: 0 7px 0 8px;
  border-top: 1px solid #f1f3f4;
}

.link {
  font-size: 7.5px;
  font-weight: 500;
  color: #1967d2;
}

.paging {
  display: flex;
  align-items: center;
  color: #80868b;
}

.paging .ic {
  width: 10px;
  height: 10px;
  fill: #9aa0a6;
}

/* devices */
.device-legend {
  display: flex;
  justify-content: space-between;
  height: 12px;
  padding: 9px 14px 0 10px;
  font-size: 6.5px;
  color: #5f6368;
}

.device {
  display: flex;
  align-items: center;
  gap: 4px;
}

.device-ic {
  box-sizing: border-box;
  border: 1.5px solid;
  border-radius: 1px;
}

.device-ic.tall {
  width: 8px;
  height: 12px;
}

.device-ic.wide {
  width: 11px;
  height: 8px;
}

.device-row {
  display: flex;
  padding: 14px 10px 0 8px;
  justify-content: space-between;
}

.device-row + .device-row {
  padding-top: 3px;
}

.device-main {
  width: 175px;
}

.stack {
  display: flex;
  height: 12px;
}

.stack i {
  display: block;
  flex-grow: 0;
  flex-shrink: 0;
}

.stack-legend {
  display: grid;
  grid-template-columns: repeat(4, 52px);
  height: 13px;
  font-size: 6.5px;
  line-height: 12px;
  color: #5f6368;
}

.stack-legend i {
  display: inline-block;
  width: 3px;
  height: 3px;
  margin-right: 4px;
  vertical-align: 1px;
}

.device-metric {
  font-size: 6.5px;
  line-height: 12px;
  color: #5f6368;
}

/* tabs */
.tabs {
  display: grid;
  grid-template-columns: repeat(3, 82px);
  height: 22px;
  margin-top: 11px;
  text-align: center;
  font-size: 7.5px;
  color: #5f6368;
}

.tabs span {
  line-height: 21px;
}

.tabs .on {
  border-bottom: 1.5px solid #1967d2;
  color: #1967d2;
  font-weight: 500;
}

.tabs .on.dark {
  color: #3c4043;
}

.search-tabs {
  grid-template-columns: 93px 93px;
  height: 21px;
  margin-top: 4px;
  margin-left: 29px;
}

.demo-tabs {
  margin-top: 10px;
}

/* hour map */
.time-map {
  display: flex;
  margin-top: 8px;
}

.time-days {
  display: grid;
  grid-template-rows: repeat(7, 9px);
  width: 15px;
  padding-left: 7px;
  box-sizing: border-box;
  font-size: 6.5px;
  line-height: 9px;
  color: #5f6368;
}

.time-grid {
  display: grid;
  grid-template-columns: repeat(24, 9.04px);
  grid-template-rows: repeat(7, 9px);
  border-left: 1px solid #e8eaed;
  border-bottom: 1px solid #dadce0;
}

.time-axis {
  display: flex;
  justify-content: space-between;
  padding: 2px 13px 0 15px;
  font-size: 6.5px;
  line-height: 8px;
  color: #5f6368;
}

.time-link {
  padding: 16px 9px 7px;
  line-height: 9px;
}

/* chips */
.chips {
  display: flex;
  gap: 4px;
  padding: 5px 0 0 31px;
}

.chip {
  padding: 2px 6px;
  border: 1px solid #aecbfa;
  border-radius: 10px;
  font-size: 8px;
  color: #5f6368;
  white-space: nowrap;
}

.chip.sel {
  border-color: #1967d2;
  color: #3c4043;
}

/* demographics */
.demo-map {
  display: flex;
  margin-top: 8px;
}

.demo-rows {
  display: grid;
  grid-template-rows: 20px 20px;
  width: 46px;
  padding: 6px 5px 0 0;
  box-sizing: border-box;
  text-align: right;
  align-items: center;
  font-size: 6.5px;
  color: #5f6368;
}

.demo-grid {
  display: grid;
  grid-template-columns: repeat(6, 25px);
  grid-template-rows: 25px 25px;
  gap: 1px;
  border-left: 1px solid #9aa0a6;
}

.demo-axis {
  display: grid;
  grid-template-columns: repeat(6, 26px);
  padding: 0 0 0 46px;
  text-align: center;
  font-size: 6.5px;
  line-height: 9px;
  color: #5f6368;
  white-space: nowrap;
}

.demo-note {
  padding: 7px 8px 0;
  font-size: 6.5px;
  line-height: 8.5px;
  color: #5f6368;
}

.note-ic {
  display: inline-block;
  width: 7px;
  height: 7px;
  vertical-align: -1px;
}

.demo-link {
  padding: 8px 8px 7px;
  line-height: 9px;
}

.scrollbar {
  flex: none;
  width: 7px;
  background: #f8f9fa;
}

.scrollbar i {
  display: block;
  height: 253px;
  margin-top: 2px;
  background: #dadce0;
}
</style>
